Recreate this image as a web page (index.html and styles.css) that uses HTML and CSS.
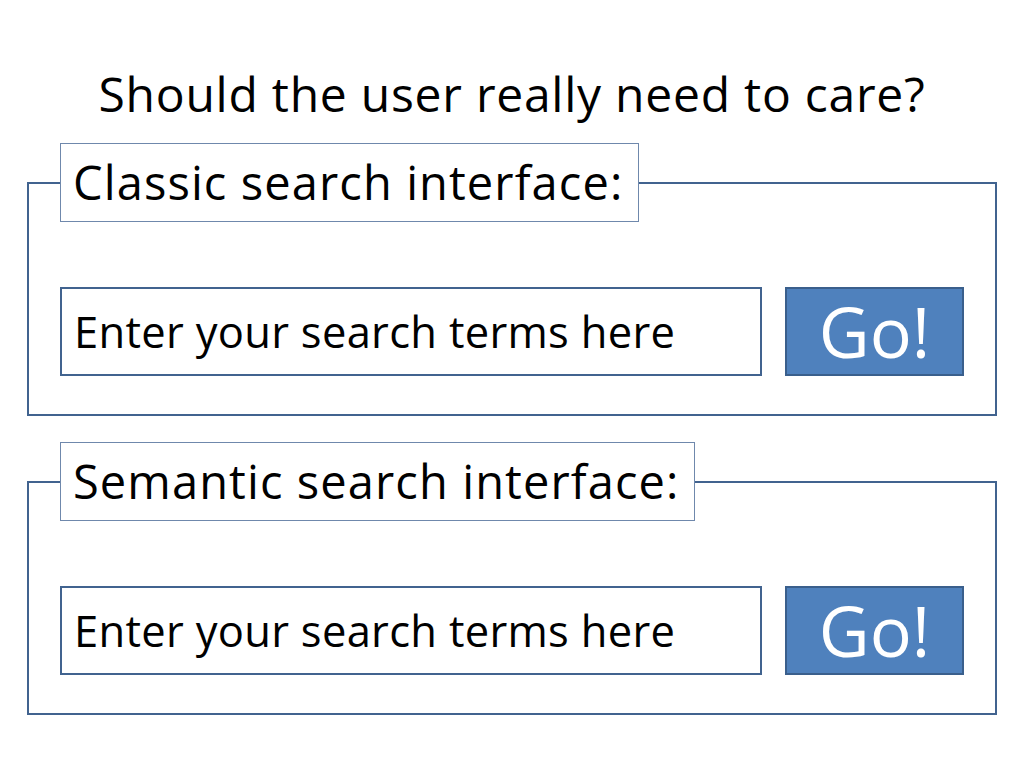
FILE: index.html
```html
<!DOCTYPE html>
<html lang="en">
<head>
<meta charset="utf-8">
<title>Should the user really need to care?</title>
<link rel="stylesheet" href="styles.css">
</head>
<body>
<main class="slide">
  <h1 class="title">Should the user really need to care?</h1>
  <fieldset class="panel">
    <legend class="panel-label">Classic search interface:</legend>
    <div class="search-row">
      <div class="search-field">Enter your search terms here</div>
      <div class="go-button">Go!</div>
    </div>
  </fieldset>
  <fieldset class="panel">
    <legend class="panel-label">Semantic search interface:</legend>
    <div class="search-row">
      <div class="search-field">Enter your search terms here</div>
      <div class="go-button">Go!</div>
    </div>
  </fieldset>
</main>
</body>
</html>
```

FILE: styles.css
```css
html, body {
  margin: 0;
  padding: 0;
  background: #ffffff;
}

body {
  font-family: "Open Sans", Lato, "Liberation Sans", sans-serif;
  font-variant-ligatures: none;
  color: #000000;
}

.slide {
  width: 1024px;
  height: 768px;
  box-sizing: border-box;
  padding: 64px 0 0 27px;
  display: flex;
  flex-direction: column;
}

.title {
  margin: 0 0 0 -27px;
  width: 1024px;
  text-align: center;
  font-size: 48px;
  letter-spacing: 0.75px;
  font-weight: normal;
  line-height: 60px;
  height: 79px;
}

.panel {
  width: 970px;
  box-sizing: border-box;
  margin: 0 0 26px 0;
  border: 2px solid #41638f;
  padding: 65px 31px 38px 31px;
  min-inline-size: 0;
}

.panel-label {
  margin: 0;
  padding: 9px 15px 10px 12px;
  border: 1px solid #6f88ac;
  font-size: 47px;
  letter-spacing: 1.1px;
  line-height: 58px;
  background: #ffffff;
}

.search-row {
  display: flex;
  gap: 23px;
  height: 89px;
}

.search-field {
  width: 702px;
  box-sizing: border-box;
  border: 2px solid #41638f;
  padding: 0 12px;
  font-size: 43.5px;
  letter-spacing: 0.3px;
  line-height: 85px;
  white-space: nowrap;
}

.go-button {
  width: 179px;
  box-sizing: border-box;
  background: #4f81bd;
  border: 2px solid #3a5f8c;
  color: #ffffff;
  font-size: 70px;
  line-height: 85px;
  text-align: center;
}
```
